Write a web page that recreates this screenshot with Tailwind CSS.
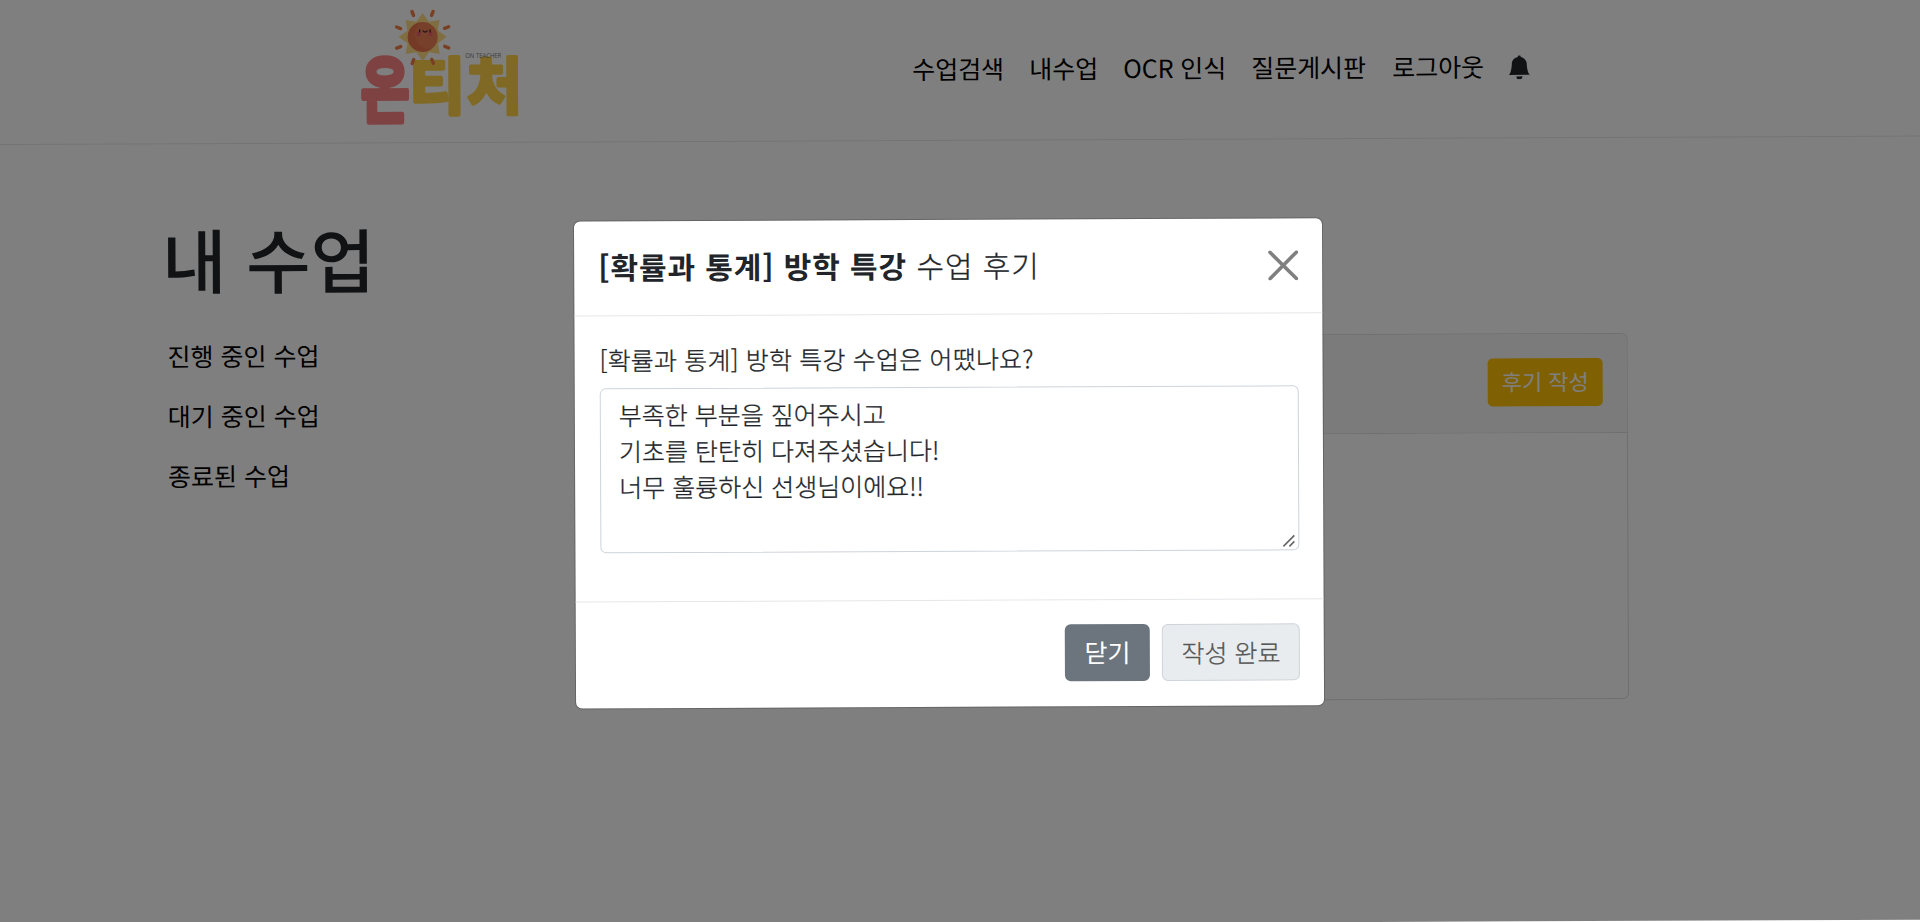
<!DOCTYPE html>
<html lang="ko">
<head>
<meta charset="utf-8">
<title>온티처 - 내 수업</title>
<script src="https://cdn.jsdelivr.net/npm/@tailwindcss/browser@4"></script>
</head>
<body class="bg-white overflow-hidden h-[922px] font-['Noto_Sans_CJK_KR','Noto_Sans_CJK_SC',sans-serif] text-[#212529]">
<div class="relative w-[1950px] h-[928px] -ml-[10px] pl-[10px] origin-[10px_0] rotate-[-0.25deg] bg-white">
  <header class="h-[145px] -ml-[10px] pl-[370px] border-b border-[#e8e8e8] flex items-start">
    <svg class="w-[164px] h-[130px] shrink-0 overflow-visible" viewBox="360 0 164 130">
      <g font-family="Noto Sans CJK KR" font-weight="700" stroke-linejoin="round">
        <text transform="translate(360.500 118.500) scale(.91 1.250)" font-size="58" fill="#ff8486" stroke="#ff8486" stroke-width="4">온</text>
        <text transform="translate(409.500 111) scale(1.030 1.070)" font-size="58" fill="#ffd24a" stroke="#ffd24a" stroke-width="4">티</text>
        <text transform="translate(466.500 111) scale(1.040 1.070)" font-size="58" fill="#ffd24a" stroke="#ffd24a" stroke-width="3.500">처</text>
      </g>
      <g transform="translate(422.500 38.800)">
        <path fill="#ffdc82" d="M0-24 6.300-15.200 17-17 15.200-6.300 24 0 15.200 6.300 17 17 6.300 15.200 0 24-6.300 15.200-17 17-15.200 6.300-24 0-15.200-6.300-17-17-6.300-15.200z"/>
        <circle r="15" fill="#ef8054"/>
        <path d="M-9 12A15 15 0 0 1-2-14.800A15 15 0 0 0 9 12A15 15 0 0 1-9 12z" fill="#e26d48" opacity=".6"/>
        <g stroke="#ee8148" stroke-width="3.400" stroke-linecap="round">
          <path d="M9-22 10.600-26M22-9 26-10.600M22 9 26 10.600M9 22 10.600 26M-9 22-10.600 26M-22 9-26 10.600M-22-9-26-10.600M-9-22-10.600-26" transform="translate(0 .5)"/>
        </g>
        <circle cx="-4" cy="-3" r="2.200" fill="#ee6070"/><circle cx="8" cy="-3" r="2.200" fill="#ee6070"/>
        <path d="M-3-5v-2M7.500-5v-2M.500-6q2 2.500 4 0" stroke="#402030" stroke-width="1.300" fill="none" stroke-linecap="round"/>
      </g>
      <text x="465" y="60" font-family="Open Sans" font-size="6.500" textLength="36" lengthAdjust="spacingAndGlyphs" fill="#777">ON TEACHER</text>
    </svg>
    <nav class="ml-[388px] mt-[52px] h-[40px] flex items-center text-[25px] leading-[40px] tracking-[-0.1px] text-black whitespace-nowrap">
      <a class="w-[117px]">수업검색</a>
      <a class="w-[94px]">내수업</a>
      <a class="w-[128px]">OCR 인식</a>
      <a class="w-[141px]">질문게시판</a>
      <a class="w-[115px]">로그아웃</a>
      <svg class="w-[24px] h-[24px] mt-[4px]" viewBox="0 0 16 16" fill="#212529"><path d="M8 16a2 2 0 0 0 2-2H6a2 2 0 0 0 2 2m.995-14.901a1 1 0 1 0-1.990 0A5 5 0 0 0 3 6c0 1.098-.5 6-2 7h14c-1.500-1-2-5.900-2-7 0-2.420-1.720-4.440-4.005-4.901"/></svg>
    </nav>
  </header>

  <div class="flex">
    <aside class="w-[600px] shrink-0 pl-[161px] pt-[69px] text-black">
      <h1 class="text-[70px] leading-[90px] font-medium text-[#212529] whitespace-nowrap">내 수업</h1>
      <ul class="mt-[22px] pl-[5px] text-[25px] leading-[60.200px]">
        <li>진행 중인 수업</li>
        <li>대기 중인 수업</li>
        <li>종료된 수업</li>
      </ul>
    </aside>
    <section class="mt-[195px] w-[1026px] h-[366px] rounded-md border border-[#dfdfdf] bg-white">
      <div class="h-[99px] rounded-t-md border-b border-[#dfdfdf] bg-[#f7f7f7] flex justify-end items-center pr-[24px]">
        <button class="w-[115px] h-[48px] -mt-[2px] rounded-[5px] bg-[#ffc107] text-white text-[22px] leading-[45px] pb-[3px]">후기 작성</button>
      </div>
    </section>
  </div>

  <div class="absolute inset-0 bg-black/50"></div>

  <div class="absolute left-[582px] top-[223px] w-[750px] h-[489px] rounded-[7px] border border-black/20 bg-white bg-clip-padding flex flex-col">
    <div class="h-[95px] shrink-0 border-b border-[#e4e7ea] pl-[24px] pr-[24px] flex items-center justify-between">
      <h2 class="pb-[4px] text-[30px] leading-[45px] tracking-[0.900px] whitespace-nowrap font-light"><b class="font-bold">[확률과 통계] 방학 특강</b> <span class="[-webkit-text-stroke:0.3px_#212529]">수업 후기</span></h2>
      <svg class="w-[30px] h-[30px]" viewBox="0 0 30 30" stroke="#808080" stroke-width="3.600" stroke-linecap="round"><path d="M1.800 1.800 28.200 28.200M28.200 1.800 1.800 28.200"/></svg>
    </div>
    <div class="h-[286px] shrink-0 border-b border-[#e4e7ea] pl-[25px] pr-[24px] pt-[24px] font-light [-webkit-text-stroke:0.3px_#212529]">
      <label class="block h-[48px] text-[25px] leading-[38px] tracking-[0.170px] whitespace-nowrap">[확률과 통계] 방학 특강 수업은 어땠나요?</label>
      <div class="relative h-[165px] rounded-md border border-[#ced4da] pl-[18px] pt-[7px] text-[25px] leading-[36.200px] whitespace-nowrap">
        <p>부족한 부분을 짚어주시고</p>
        <p>기초를 탄탄히 다져주셨습니다!</p>
        <p>너무 훌륭하신 선생님이에요!!</p>
        <svg class="absolute right-[3px] bottom-[2px] w-[13px] h-[13px]" viewBox="0 0 13 13" stroke="#666" stroke-width="1.600"><path d="M1 12 12 1M7 12l5-5"/></svg>
      </div>
    </div>
    <div class="flex-1 px-[24px] pb-[2px] flex items-center justify-end gap-[12px] text-[25px] leading-[54px]">
      <button class="w-[85px] h-[57px] pb-[3px] rounded-md bg-[#6c757d] text-white">닫기</button>
      <button class="w-[138px] h-[57px] pb-[3px] rounded-md border border-[#ced4da] bg-[#e9ecef] text-[#555] font-light [-webkit-text-stroke:0.3px_#555]">작성 완료</button>
    </div>
  </div>
</div>
</body>
</html>
